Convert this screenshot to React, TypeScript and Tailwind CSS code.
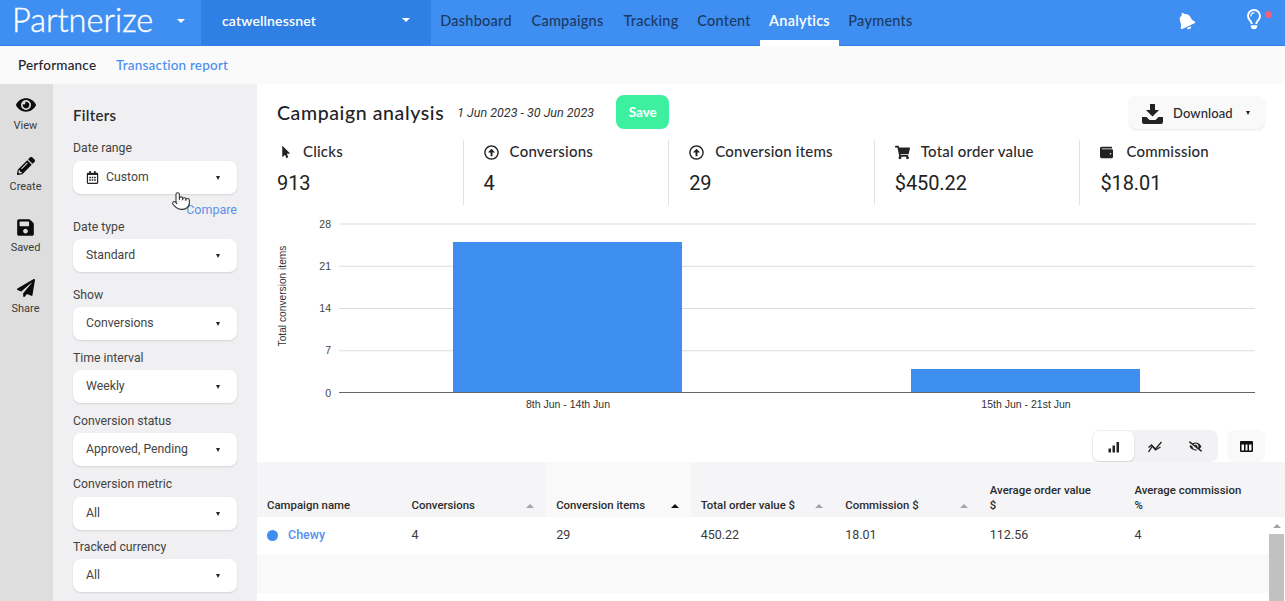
import React from "react";
import { FaEye, FaPencilAlt, FaSave, FaPaperPlane, FaMousePointer, FaRegArrowAltCircleUp, FaShoppingCart, FaWallet, FaRegLightbulb, FaBell, FaEyeSlash, FaRegCalendarAlt } from "react-icons/fa";
import { Pointer } from "lucide-react";

const Q = "font-['Lato','Noto_Sans',sans-serif]";
const R = "font-['Roboto','Liberation_Sans',sans-serif]";

function Caret({ className = "" }: { className?: string }) {
  return <span className={`inline-block w-0 h-0 border-l-[2.5px] border-r-[2.5px] border-t-[4px] border-l-transparent border-r-transparent border-t-[#222] ${className}`} />;
}

function Field({ label, value, top, gap, icon }: { label: string; value: string; top: string; gap: string; icon?: boolean }) {
  return (
    <div className={top}>
      <div className="text-[12.25px] leading-4 text-[#444]">{label}</div>
      <div className={`${gap} h-[33px] w-[164px] bg-white rounded-lg shadow-[0_1px_2px_rgba(0,0,0,0.12)] flex items-center pl-[13px] pr-[17px] text-[12.25px] text-[#444]`}>
        {icon && <FaRegCalendarAlt className="text-[13px] text-[#222] mr-[7px]" />}
        <span className="flex-1">{value}</span>
        <Caret />
      </div>
    </div>
  );
}

function RailItem({ icon, label, cls }: { icon: React.ReactNode; label: string; cls: string }) {
  return (
    <div className={`flex flex-col items-center ${cls}`}>
      <div className="h-[18px] flex items-center justify-center text-[#0b0b0b]">{icon}</div>
      <div className="mt-[6px] text-[11px] leading-3 text-[#3a3a3a]">{label}</div>
    </div>
  );
}

function Stat({ icon, label, value, first }: { icon: React.ReactNode; label: string; value: string; first?: boolean }) {
  return (
    <div className={`h-[65px] pl-5 pt-[2px] ${first ? "" : "border-l border-[#e2e2e2]"}`}>
      <div className="flex items-center h-[18px]">
        <div className="w-[26px] flex items-center text-[#222] pt-[2px]">{icon}</div>
        <span className={`${Q} text-[15px] font-medium tracking-[0.2px] text-[#2a2a2e]`}>{label}</span>
      </div>
      <div className={`${R} mt-[11px] text-[20px] leading-6 font-[450] tracking-[-0.1px] text-[#222]`}>{value}</div>
    </div>
  );
}

function Nav({ children, active, cls }: { children: React.ReactNode; active?: boolean; cls: string }) {
  return (
    <div className={`${cls} h-[46px] pb-[5px] flex items-center justify-center relative text-[14.5px] font-medium tracking-[0.25px] ${active ? "text-white font-semibold" : "text-[#1b3a63]"}`}>
      {children}
      {active && <div className="absolute left-0 right-0 bottom-0 h-[6px] bg-white" />}
    </div>
  );
}

function Chart() {
  const grid = [[224, "28"], [266.25, "21"], [308.5, "14"], [350.75, "7"]] as const;
  return (
    <svg width="1028" height="210" viewBox="257 210 1028 210" className="block" fontFamily="Liberation Sans, Arial, sans-serif">
      {grid.map(([y, t]) => (
        <g key={t}>
          <line x1="339" x2="1255" y1={y} y2={y} stroke="#dcdcdc" strokeWidth="1" />
          <text x="331" y={y + 3.5} textAnchor="end" fontSize="10.5" fill="#444">{t}</text>
        </g>
      ))}
      <rect x="453" y="242" width="229" height="151" fill="#3e8ef0" />
      <rect x="911" y="369" width="229" height="24" fill="#3e8ef0" />
      <line x1="339" x2="1255" y1="392.5" y2="392.5" stroke="#666" strokeWidth="1.2" />
      <text x="331" y="396.5" textAnchor="end" fontSize="10.5" fill="#444">0</text>
      <text x="568" y="408" textAnchor="middle" fontSize="10.5" fill="#333">8th Jun - 14th Jun</text>
      <text x="1026" y="408" textAnchor="middle" fontSize="10.5" fill="#333">15th Jun - 21st Jun</text>
      <text transform="translate(286 296) rotate(-90)" textAnchor="middle" fontSize="10.2" fill="#333">Total conversion items</text>
    </svg>
  );
}

function Head({ children, arrow, light, wrap }: { children: React.ReactNode; arrow?: "grey" | "dark"; light?: boolean; wrap?: boolean }) {
  return (
    <div className={`h-[55px] pl-[10px] flex items-end pb-[4px] text-[11.4px] leading-[15px] font-medium text-[#2b2b2b] relative ${light ? "bg-[#f9f9fa]" : ""}`}>
      <span className={wrap ? "w-[108px]" : ""}>{children}</span>
      {arrow && <span className={`absolute right-[12px] bottom-[9px] w-0 h-0 border-l-[4px] border-r-[4px] border-b-[4px] border-l-transparent border-r-transparent ${arrow === "dark" ? "border-b-[#111]" : "border-b-[#a5a5a5]"}`} />}
    </div>
  );
}

export default function App() {
  return (
    <div className={`${R} w-[1285px] h-[601px] overflow-hidden bg-white flex flex-col relative`}>
      {/* Top bar */}
      <header className={`${Q} h-[46px] bg-[#3f8ef2] border-b border-[#2f7fe4] flex shrink-0`}>
        <div className="w-[201px] flex items-center pl-[12px] pb-[4px]">
          <span className="text-[32.5px] leading-none font-light [-webkit-text-stroke:0.4px_white] text-white w-[165px]">Partnerize</span>
          <Caret className="border-l-[4px] border-r-[4px] border-t-[4px] !border-t-white" />
        </div>
        <div className="w-[230px] bg-[#2f7fe4] flex items-center pl-[21px] pr-[21px] pb-[5px]">
          <span className="flex-1 text-[14px] font-semibold tracking-[0.15px] text-white">catwellnessnet</span>
          <Caret className="border-l-[4px] border-r-[4px] border-t-[4px] !border-t-white" />
        </div>
        <Nav cls="w-[90px]">Dashboard</Nav>
        <Nav cls="w-[93px]">Campaigns</Nav>
        <Nav cls="w-[74px]">Tracking</Nav>
        <Nav cls="w-[72px]">Content</Nav>
        <Nav cls="w-[79px]" active>Analytics</Nav>
        <Nav cls="w-[83px]">Payments</Nav>
        <div className="flex-1 relative">
          <FaBell className="absolute left-[255px] top-[12px] text-[18px] text-white -rotate-[25deg]" />
          <FaRegLightbulb className="absolute left-[322px] top-[9px] text-[20px] text-white" />
          <span className="absolute left-[343px] top-[11px] w-[7px] h-[7px] rounded-full bg-[#f0617e]" />
        </div>
      </header>

      {/* Sub navigation */}
      <div className={`${Q} h-[38px] bg-[#fafafa] shrink-0 flex items-center pl-[18px] pt-[1px] text-[13.5px] font-medium tracking-[0.2px]`}>
        <span className="text-[#24242a] w-[98px]">Performance</span>
        <span className="text-[#4a8df0]">Transaction report</span>
      </div>

      <div className="flex flex-1 min-h-0">
        {/* Rail */}
        <aside className="w-[53px] bg-[#dedede] shrink-0 flex flex-col pr-[2px]">
          <RailItem cls="mt-[12px]" icon={<FaEye className="text-[20px]" />} label="View" />
          <RailItem cls="mt-[25px]" icon={<FaPencilAlt className="text-[18px]" />} label="Create" />
          <RailItem cls="mt-[25px]" icon={<FaSave className="text-[19px]" />} label="Saved" />
          <RailItem cls="mt-[25px]" icon={<FaPaperPlane className="text-[18px]" />} label="Share" />
        </aside>

        {/* Filters */}
        <aside className="w-[204px] bg-[#f0eff1] shrink-0 pl-5">
          <div className={`${Q} mt-[22px] text-[15px] leading-[18px] font-semibold tracking-[0.3px] text-[#2b2b30]`}>Filters</div>
          <Field top="mt-[16px]" gap="mt-[5px]" label="Date range" value="Custom" icon />
          <div className="w-[164px] text-right text-[12.5px] leading-4 mt-[8px] text-[#5a93ee]">Compare</div>
          <Field top="mt-[1px]" gap="mt-[4px]" label="Date type" value="Standard" />
          <Field top="mt-[15px]" gap="mt-[4px]" label="Show" value="Conversions" />
          <Field top="mt-[10px]" gap="mt-[4px]" label="Time interval" value="Weekly" />
          <Field top="mt-[10px]" gap="mt-[4px]" label="Conversion status" value="Approved, Pending" />
          <Field top="mt-[10px]" gap="mt-[5px]" label="Conversion metric" value="All" />
          <Field top="mt-[9px]" gap="mt-[4px]" label="Tracked currency" value="All" />
        </aside>

        {/* Main */}
        <main className="flex-1 min-w-0 flex flex-col bg-white">
          <div className="h-[34px] mt-[11px] flex items-center pl-5 pr-5">
            <span className={`${Q} text-[19.5px] font-medium tracking-[0.6px] pt-[1px] text-[#222226]`}>Campaign analysis</span>
            <span className="ml-[13px] text-[12.5px] italic text-[#333] w-[146px] pt-[2px]">1 Jun 2023 - 30 Jun 2023</span>
            <span className={`${Q} ml-[13px] w-[53px] h-[34px] rounded-lg bg-[#3df09f] text-white text-[13.5px] font-bold flex items-center justify-center`}>Save</span>
            <div className="flex-1" />
            <div className="w-[136px] h-[33px] rounded-lg bg-[#f9f9fa] shadow-[0_1px_2px_rgba(0,0,0,0.1)] flex items-center pl-[13px]">
              <svg width="21" height="20" viewBox="0 0 21 20" fill="#222" className="mt-[3px]"><path d="M8 0h5v6h4l-6.500 6.500L4 6h4zM0 13h4.500l3 3h6l3-3H21v5a2 2 0 0 1-2 2H2a2 2 0 0 1-2-2z" /></svg>
              <span className={`${Q} ml-[10px] pt-[4px] text-[13px] font-medium tracking-[0.1px] text-[#2a2a2e] w-[70px]`}>Download</span>
              <Caret className="ml-[3px] mt-[2px]" />
            </div>
          </div>

          <div className="grid grid-cols-5 mt-[11px]">
            <Stat first icon={<FaMousePointer className="text-[12px] ml-[3px]" />} label="Clicks" value="913" />
            <Stat icon={<FaRegArrowAltCircleUp className="text-[15px]" />} label="Conversions" value="4" />
            <Stat icon={<FaRegArrowAltCircleUp className="text-[15px]" />} label="Conversion items" value="29" />
            <Stat icon={<FaShoppingCart className="text-[15px]" />} label="Total order value" value="$450.22" />
            <Stat icon={<FaWallet className="text-[13px]" />} label="Commission" value="$18.01" />
          </div>

          <div className="mt-[5px]"><Chart /></div>

          <div className="h-[32px] mt-[10px] flex justify-end pr-[20px]">
            <div className="w-[126px] h-[32px] rounded-lg bg-[#f2f1f3] flex items-center p-[1px]">
              <div className="w-[41px] h-[30px] bg-white rounded-md shadow-[0_1px_2px_rgba(0,0,0,0.15)] flex items-center justify-center pt-[1px]">
                <svg width="12" height="12" viewBox="0 0 12 12" fill="#222"><rect x="0.500" y="7.500" width="2.500" height="4" /><rect x="4.500" y="4.500" width="2.500" height="7" /><rect x="8.500" y="1" width="2.500" height="10.500" /></svg>
              </div>
              <div className="w-[41px] flex justify-center pt-[1px]">
                <svg width="14" height="12" viewBox="0 0 14 12" fill="none" stroke="#222" strokeWidth="1.300"><path d="M0.500 11l4-6 3 3 6-7" /><path d="M0.500 6.500l3-2.500 4 5 5-3" /></svg>
              </div>
              <div className="w-[41px] flex justify-center pt-[1px]"><FaEyeSlash className="text-[13px] text-[#222]" /></div>
            </div>
            <div className="ml-[9px] w-[38px] h-[32px] rounded-lg bg-[#f9f9fa] flex items-center justify-center">
              <svg width="13" height="11" viewBox="0 0 13 11" fill="#111"><path d="M1 0h11a1 1 0 0 1 1 1v9a1 1 0 0 1-1 1H1a1 1 0 0 1-1-1V1a1 1 0 0 1 1-1zm.500 3.500v6h2.500v-6zm4 0v6h2v-6zm3.500 0v6h2.500v-6z" fillRule="evenodd" /></svg>
            </div>
          </div>

          {/* Table */}
          <div className="bg-[#f5f5f7] grid grid-cols-[repeat(7,144.57px)] pr-[16px]">
            <Head>Campaign name</Head>
            <Head arrow="grey">Conversions</Head>
            <Head arrow="dark" light>Conversion items</Head>
            <Head arrow="grey">Total order value $</Head>
            <Head arrow="grey">Commission $</Head>
            <Head wrap>Average order value $</Head>
            <Head wrap>Average commission %</Head>
          </div>
          <div className="flex flex-1 min-h-0">
            <div className="flex-1">
              <div className="h-[37px] grid grid-cols-[repeat(7,144.57px)] items-center text-[12.5px] text-[#3a3a3a]">
                <div className="pl-[10px] flex items-center">
                  <span className="w-[11px] h-[11px] rounded-full bg-[#3e8ef0]" />
                  <span className="ml-[10px] font-medium text-[#5a8ff0]">Chewy</span>
                </div>
                <div className="pl-[10px]">4</div>
                <div className="pl-[10px]">29</div>
                <div className="pl-[10px]">450.22</div>
                <div className="pl-[10px]">18.01</div>
                <div className="pl-[10px]">112.56</div>
                <div className="pl-[10px]">4</div>
              </div>
              <div className="h-[39px] bg-[#f9f9fa]" />
            </div>
            <div className="w-[16px] bg-white flex flex-col pr-[1px]">
              <div className="h-[17px] flex items-center justify-center">
                <span className="w-0 h-0 border-l-[4px] border-r-[4px] border-b-[4px] border-l-transparent border-r-transparent border-b-[#a3a3a3]" />
              </div>
              <div className="flex-1 bg-[#c1c1c1]" />
            </div>
          </div>
        </main>
      </div>

      {/* Pointer over the page */}
      <Pointer className="absolute left-[171px] top-[190px] w-[20px] h-[22px] text-[#333] fill-white" strokeWidth={1.3} />
    </div>
  );
}
